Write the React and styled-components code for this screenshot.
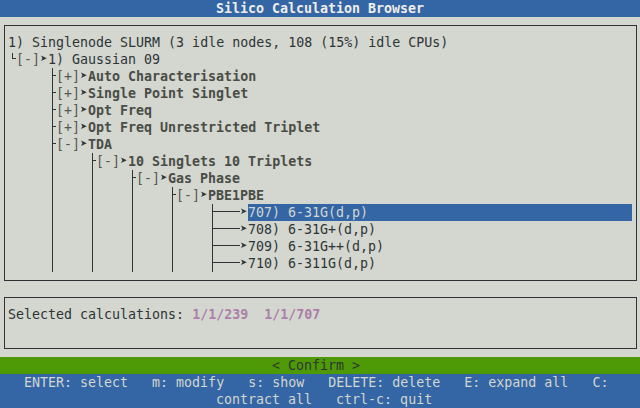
import React from "react";
import styled, { createGlobalStyle } from "styled-components";

const CELL = 8;
const ROW = 17;

const GlobalStyle = createGlobalStyle`
  html, body {
    margin: 0;
    padding: 0;
    background: #d3d7cf;
  }
`;

const Screen = styled.div`
  width: 640px;
  height: 408px;
  display: flex;
  flex-direction: column;
  overflow: hidden;
  background: #d3d7cf;
  color: #2e3436;
  font-family: "DejaVu Sans Mono", "Liberation Mono", monospace;
  font-size: 13.3px;
  line-height: ${ROW}px;
  white-space: pre;
`;

const TitleBar = styled.div`
  height: ${ROW}px;
  background: #3465a4;
  color: #eeeeec;
  font-weight: bold;
  text-align: center;
`;

const Panel = styled.div`
  margin: ${(p) => p.$gap}px 3px 0 4px;
  border: 1px solid #2e3436;
  padding: 8px 3px 8px 3px;
  height: ${(p) => p.$rows * ROW}px;
`;

const Line = styled.div`
  display: flex;
  height: ${ROW}px;
  width: ${78 * CELL}px;
`;

const Message = styled.div`
  height: ${ROW}px;
`;

const Rule = styled.span`
  position: relative;
  flex: none;
  width: ${CELL}px;
  height: ${ROW}px;

  &::before {
    content: "";
    position: absolute;
    left: 4px;
    width: 1px;
    background: #2e3436;
    top: ${(p) => (p.$kind === "corner" ? "2px" : "0")};
    bottom: ${(p) => (p.$kind === "corner" ? "9px" : "0")};
    display: ${(p) => (p.$kind === "dash" ? "none" : "block")};
  }

  &::after {
    content: "";
    position: absolute;
    top: 7px;
    height: 1px;
    background: #2e3436;
    left: ${(p) => (p.$kind === "dash" ? "0" : "4px")};
    right: 0;
    display: ${(p) => (p.$kind === "pipe" ? "none" : "block")};
  }
`;

const Blank = styled.span`
  flex: none;
  width: ${CELL}px;
`;

const Toggle = styled.span`
  color: #555753;
`;

const Label = styled.span`
  color: ${(p) => (p.$selected ? "#d3d7cf" : p.$bold ? "#4a4c48" : "#2e3436")};
  background: ${(p) => (p.$selected ? "#3465a4" : "transparent")};
  font-weight: ${(p) => (p.$bold ? "bold" : "normal")};
  flex: ${(p) => (p.$selected ? "1" : "none")};
`;

const Ids = styled.span`
  color: #ad7fa8;
  font-weight: bold;
`;

const ConfirmBar = styled.div`
  margin-top: 8px;
  height: ${ROW}px;
  background: #4e9a06;
  color: #2e3436;
  padding-left: ${34 * CELL}px;
`;

const Footer = styled.div`
  height: ${2 * ROW}px;
  background: #3465a4;
  color: #d3d7cf;
`;

const FooterLine = styled.div`
  padding-left: ${(p) => p.$col * CELL}px;
`;

const Arrow = () => (
  <svg width={CELL} height={ROW} viewBox="0 0 8 17" style={{ flex: "none" }}>
    <path d="M1 4.5 L6.8 7.3 L1 10.1 L2.4 7.3 Z" fill="#2e3436" />
  </svg>
);

const ruleKinds = { "│": "pipe", "├": "tee", "└": "corner", "─": "dash" };

const Guides = ({ text }) =>
  [...text].map((ch, i) =>
    ruleKinds[ch] ? <Rule key={i} $kind={ruleKinds[ch]} /> : <Blank key={i} />
  );

const pipes = (n) => "     " + "│    ".repeat(n - 1);

const tree = [
  { guides: "", label: "1) Singlenode SLURM (3 idle nodes, 108 (15%) idle CPUs)", root: true },
  { guides: "└", toggle: "[-]", label: "1) Gaussian 09" },
  { guides: "     ├", toggle: "[+]", label: "Auto Characterisation", bold: true },
  { guides: "     ├", toggle: "[+]", label: "Single Point Singlet", bold: true },
  { guides: "     ├", toggle: "[+]", label: "Opt Freq", bold: true },
  { guides: "     ├", toggle: "[+]", label: "Opt Freq Unrestricted Triplet", bold: true },
  { guides: "     ├", toggle: "[-]", label: "TDA", bold: true },
  { guides: pipes(2) + "├", toggle: "[-]", label: "10 Singlets 10 Triplets", bold: true },
  { guides: pipes(3) + "├", toggle: "[-]", label: "Gas Phase", bold: true },
  { guides: pipes(4) + "├", toggle: "[-]", label: "PBE1PBE", bold: true },
  { guides: pipes(5) + "├───", label: "707) 6-31G(d,p)", selected: true },
  { guides: pipes(5) + "├───", label: "708) 6-31G+(d,p)" },
  { guides: pipes(5) + "├───", label: "709) 6-31G++(d,p)" },
  { guides: pipes(5) + "├───", label: "710) 6-311G(d,p)" },
];

const TreeLine = ({ node }) => (
  <Line>
    <Guides text={node.guides} />
    {node.toggle && <Toggle>{node.toggle}</Toggle>}
    {!node.root && <Arrow />}
    <Label $bold={node.bold} $selected={node.selected}>
      {node.label}
    </Label>
  </Line>
);

export default function App() {
  return (
    <>
      <GlobalStyle />
      <Screen>
        <TitleBar>Silico Calculation Browser</TitleBar>
        <Panel $gap={8} $rows={14}>
          {tree.map((node, i) => (
            <TreeLine key={i} node={node} />
          ))}
        </Panel>
        <Panel $gap={16} $rows={2}>
          <Message>
            {"Selected calculations: "}
            <Ids>1/1/239</Ids>
            {"  "}
            <Ids>1/1/707</Ids>
          </Message>
        </Panel>
        <ConfirmBar>{"< Confirm >"}</ConfirmBar>
        <Footer>
          <FooterLine $col={3}>
            ENTER: select   m: modify   s: show   DELETE: delete   E: expand all   C:
          </FooterLine>
          <FooterLine $col={27}>contract all   ctrl-c: quit</FooterLine>
        </Footer>
      </Screen>
    </>
  );
}
